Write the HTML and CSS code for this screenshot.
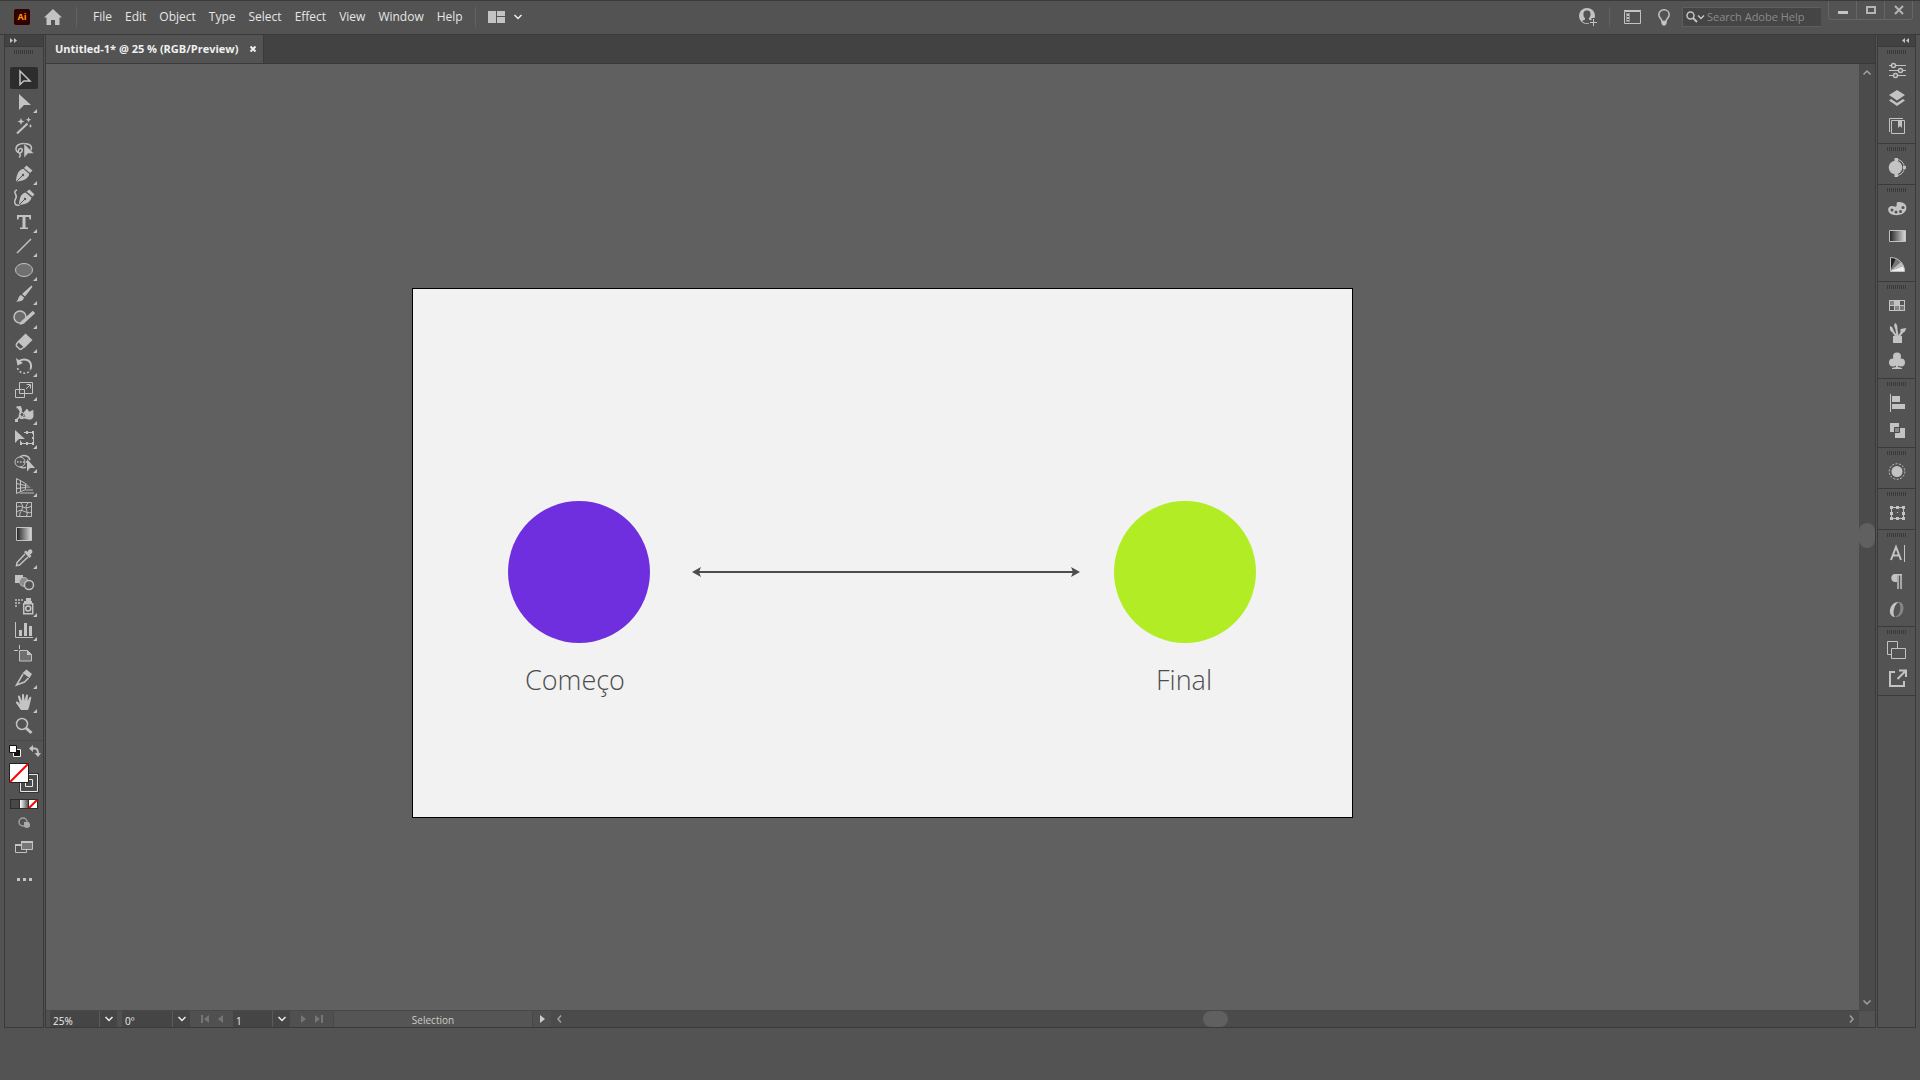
FILE: index.html
```html
<!DOCTYPE html>
<html lang="en">
<head>
<meta charset="utf-8">
<title>Untitled-1* @ 25 % (RGB/Preview)</title>
<link rel="stylesheet" href="styles.css">
</head>
<body>
<header class="topbar">
  <span class="logo">Ai</span>
  <button class="home" aria-label="Home"><svg width="18" height="16" viewBox="0 0 18 16"><path class="f" d="M9 0l9 8.500h-2.500V16H11v-5H7v5H2.500V8.500H0z"/></svg></button>
  <span class="divider"></span>
  <nav class="menu">
    <button>File</button><button>Edit</button><button>Object</button><button>Type</button><button>Select</button><button>Effect</button><button>View</button><button>Window</button><button>Help</button>
  </nav>
  <span class="divider"></span>
  <button class="arrange" aria-label="Arrange documents"><svg width="33" height="12" viewBox="0 0 33 12"><path class="f" d="M0 0h8v12H0zM9 0h8v5H9zM9 6h8v6H9z"/><path class="w15" d="M26.500 4L30 7.500 33.500 4"/></svg></button>
  <div class="topbar-right">
    <button class="account" aria-label="Account"><svg width="20" height="18" viewBox="0 0 20 18"><circle class="f" cx="8" cy="8" r="8"/><path fill="#535353" d="M8 2.500c3 0 3.800 2 3.500 4.500-.2 1.500-.8 2.500-1.500 3v1.500l3 1.500c-3 3-7 3-10 0l3-1.500V10C5 9.500 4.600 8.500 4.500 7 4.200 4.500 5 2.500 8 2.500z"/><path stroke="#535353" stroke-width="4" d="M14.500 10v8M10 14.500h8"/><path class="s" d="M14.500 11v7M11 14.500h7"/></svg></button>
    <span class="divider"></span>
    <button class="workspace-btn" aria-label="Workspace"><svg width="17" height="14" viewBox="0 0 17 14"><path class="s" d="M.5 1.500h16v12H.5z"/><path class="s" d="M0 .5h17"/><path class="s" d="M2.500 3.500h3v8h-3z" opacity=".5"/><path class="f" d="M3 4h2v2H3zM3 7h2v2H3zM3 10h2v1H3z"/></svg></button>
    <button class="tips" aria-label="Learn"><svg width="12" height="17" viewBox="0 0 12 17"><path class="s15" d="M4 12.500C4 10 .8 9 .8 5.700.8 3 3 .8 6 .8S11.200 3 11.200 5.700C11.200 9 8 10 8 12.500z"/><path class="f" d="M3.500 12h5v3L7 16.500H5L3.500 15z"/></svg></button>
    <label class="search"><svg width="19" height="12" viewBox="0 0 19 12"><circle class="s15" cx="4.500" cy="4.500" r="3.500"/><path class="s2" d="M7 7l4 4"/><path class="s15" d="M12 4.500l3 3 3-3"/></svg><input type="text" placeholder="Search Adobe Help" aria-label="Search Adobe Help"></label>
    <div class="window-controls">
      <button aria-label="Minimize"><svg width="12" height="10" viewBox="0 0 12 10"><path class="f" d="M1 6h10v3H1z"/></svg></button>
      <button aria-label="Maximize"><svg width="12" height="10" viewBox="0 0 12 10"><path fill="none" stroke="#b4b4b4" stroke-width="2" d="M2 2h8v6H2z"/></svg></button>
      <button aria-label="Close"><svg width="12" height="10" viewBox="0 0 12 10"><path fill="none" stroke="#b4b4b4" stroke-width="2" d="M2 1l8 8M10 1L2 9"/></svg></button>
    </div>
  </div>
</header>

<main class="main">
  <aside class="panel tools">
    <button class="collapse" aria-label="Expand tools"><svg width="7" height="5" viewBox="0 0 7 5"><path class="f" d="M0 0l3 2.500L0 5zM4 0l3 2.500L4 5z"/></svg></button>
    <span class="grip"></span>
    <div class="tool-list">
      <button class="tool selected" aria-label="Selection"><svg viewBox="0 0 24 24"><path class="s15" d="M8 5v13.500l3.800-3.500H18z"/></svg></button>
      <button class="tool more" aria-label="Direct selection"><svg viewBox="0 0 24 24"><path class="f" d="M7 4v16l5-5h7z"/></svg></button>
      <button class="tool" aria-label="Magic wand"><svg viewBox="0 0 24 24"><path class="s2" d="M5 19.500L15.500 9.500"/><path class="f" d="M9 4l1 2.500 2.500 1-2.500 1-1 2.500-1-2.500-2.500-1 2.500-1zM16.500 3l.8 2 2 .8-2 .8-.8 2-.8-2-2-.8 2-.8zM18.500 10l.6 1.400 1.400.6-1.400.6-.6 1.400-.6-1.400-1.400-.6 1.400-.6z"/></svg></button>
      <button class="tool" aria-label="Lasso"><svg viewBox="0 0 24 24"><path class="s15" d="M6 14.500C3 13 3.500 8.500 6 7c4-2.500 13-1.500 13.500 2.500.1 1.500-.5 2.500-1.500 3.500M7 15c3 .5 4.500-4 2-4.500-2.500-.2-3.500 3-2 4.500 1.500 1.200 2 3 0 4.500"/><path class="f" stroke="#535353" stroke-width=".5" d="M12 5.500v14.500l4-4.500h6z"/></svg></button>
      <button class="tool more" aria-label="Pen"><svg viewBox="0 0 24 24"><path class="f" d="M14.500 3.500l6 5-2.500 2.500-6-5zM11.300 6.700l6 5.300c-1 4-4 6.500-12 7.500L4 19c.6-8 3.300-11.200 7.300-12.300z"/><path stroke="#535353" d="M4.500 19.500l6-6"/><circle cx="11" cy="13" r="1.200" fill="#535353"/></svg></button>
      <button class="tool" aria-label="Curvature"><svg viewBox="0 0 24 24"><path class="f" d="M17.500 3.500l5 5-2 2-6-5zM13.500 6.500l6 5c-1 4-4 6.500-12 7.500L7 18c.6-7 2.500-10.500 6.500-11.500z"/><path stroke="#535353" d="M7 19l6-6"/><circle cx="13" cy="13" r="1.200" fill="#535353"/><path class="s15" d="M5 4c-2 .5-3 2-1.500 4 1.500 2.500 1 4-.5 6-1 3 0 6 4.500 5"/></svg></button>
      <button class="tool more" aria-label="Type"><svg viewBox="0 0 24 24"><path class="f" d="M5 5h14v4.500h-1.500L17 7h-3.500v10.500H16V19H8v-1.500h2.500V7H7l-.5 2.500H5z"/></svg></button>
      <button class="tool more" aria-label="Line segment"><svg viewBox="0 0 24 24"><path class="s15" d="M5 19L19 5"/></svg></button>
      <button class="tool more" aria-label="Ellipse"><svg viewBox="0 0 24 24"><ellipse cx="12" cy="12" rx="8.500" ry="6.500" fill="#707070" stroke="#c3c3c3"/></svg></button>
      <button class="tool more" aria-label="Paintbrush"><svg viewBox="0 0 24 24"><path class="f" d="M19.500 3.500c1 .8 1 1.500.5 2L13 14.500l-3-2.500zM9 13l3 2.500c-.5 3-3 4.500-8 4 3-1.500 2-5.500 5-6.500z"/></svg></button>
      <button class="tool more" aria-label="Shaper"><svg viewBox="0 0 24 24"><circle cx="8" cy="11" r="6" fill="#6b6b6b" stroke="#c3c3c3" stroke-width="1.500"/><path stroke="#c3c3c3" stroke-width="3.500" d="M11 16l11-10"/><path class="f" d="M9.500 14.500l3 3L7.500 19z"/></svg></button>
      <button class="tool more" aria-label="Eraser"><svg viewBox="0 0 24 24"><path class="f" d="M13.500 3.500l7 6.500-8 8-7-6.500z"/><path class="s15" d="M7 11l-2.500 3c-.5 1-.3 1.500 0 2l3 3c1 .5 1.500.5 2 0l2.500-2"/></svg></button>
      <button class="tool more" aria-label="Rotate"><svg viewBox="0 0 24 24"><path class="s2" d="M6 8c5-4.500 12-2.500 13 3 .3 2 0 3-.5 4"/><path class="f" d="M4 4l1.500 7.500L11 9z"/><path class="s15" stroke-dasharray="2 2" d="M5.500 14c2 6 10 7.500 13 1.500"/></svg></button>
      <button class="tool more" aria-label="Scale"><svg viewBox="0 0 24 24"><path class="s" d="M7.500 4.500h13v11h-13zM3.500 11.500h9v8h-9zM14 11l4-4M14.500 6.500h4v4"/></svg></button>
      <button class="tool more" aria-label="Width"><svg viewBox="0 0 24 24"><path class="s2" d="M4.500 5.500c3-.8 4.500 0 4.500 3 0 2.500-2.500 5-1 7s3.500-.5 5.500 0 5 2.500 6.500 0-.5-5 .5-6.500"/><path class="s15" d="M3.500 18.500L14.500 9"/><path class="f" d="M12 10c2-1 1.500-3 3-3s1 3 3 2.500 2-1.500 3.500-1.500L20 16c-3 1-4-1-7-1.500zM3 17h3v3H3zM5 5l4-1 1 5-2 1z"/><circle cx="10" cy="12.500" r="2" class="s solid"/></svg></button>
      <button class="tool more" aria-label="Free transform"><svg viewBox="0 0 24 24"><path class="f" d="M3 4v13l4-4h6z"/><path class="s" d="M12 6.500h9.500v11h-13v-3"/><path class="f" d="M14 5h2v3h-2zM20 5h2v3h-2zM20 11h2v2h-2zM20 16h2v3h-2zM14 16h2v3h-2zM8 16h2v3H8z"/></svg></button>
      <button class="tool more" aria-label="Shape builder"><svg viewBox="0 0 24 24"><circle class="s" cx="8" cy="12" r="5"/><path class="s15" d="M8 7c3-3 9-1.500 10 3M8 17c2 1 5 1 6 0"/><path class="s15" stroke-dasharray="1.500 1.500" d="M5 12h10"/><path class="f" d="M15 9v12.500l3-3.500h5z"/></svg></button>
      <button class="tool more" aria-label="Perspective grid"><svg viewBox="0 0 24 24"><path class="s" d="M4.500 4.500v15l9-4v-6zM4.500 9.500l9 2M4.500 14.500l9-1M8.500 6.500v11"/><path fill="#858585" d="M14 9l5 5h-5zM13 15h8v2h-8zM9 18h13v2H7z"/></svg></button>
      <button class="tool" aria-label="Mesh"><svg viewBox="0 0 24 24"><path class="s" d="M4.500 4.500h15v14h-15zM5 9c5-3 7 4 14.500-1M5 14c5-5 9 3 14.500 0M9 5c5 5-3 9-1 13.500M16 5c-5 5 2 9-2 13.500"/></svg></button>
      <button class="tool" aria-label="Gradient"><svg viewBox="0 0 24 24"><defs><linearGradient id="ramp"><stop offset="0" stop-color="#222"/><stop offset="1" stop-color="#ddd"/></linearGradient></defs><path class="s ramp" d="M4.500 5.500h15v13h-15z"/></svg></button>
      <button class="tool more" aria-label="Eyedropper"><svg viewBox="0 0 24 24"><path class="s15" d="M13 8l-8 8.500-.5 3 3-.5L16 11"/><path class="f" d="M12 6l2-1.500L15.500 6c1-3 3-3.500 4.300-2 1.200 1.500.7 3.500-1.800 4.500l1.500 1.500-2 2z"/></svg></button>
      <button class="tool" aria-label="Blend"><svg viewBox="0 0 24 24"><path class="f" d="M3 5h8v8H3z"/><circle cx="12" cy="12" r="4.500" fill="#8c8c8c" stroke="#b4b4b4"/><circle cx="17" cy="15" r="4.500" class="s15 solid"/></svg></button>
      <button class="tool more" aria-label="Symbol sprayer"><svg viewBox="0 0 24 24"><path class="s15" d="M11.700 9.700h9v10h-9z"/><path class="f" d="M14 4h5v3h-5zM12 7h8v2h-8z"/><circle class="s15" cx="16.200" cy="14.500" r="2.500"/><path fill="#a5a5a5" d="M3 5h2v2H3zM6 5h2v2H6zM9 5h2v2H9zM3 8h2v2H3zM6 8h2v2H6zM3 11h2v2H3z"/></svg></button>
      <button class="tool more" aria-label="Column graph"><svg viewBox="0 0 24 24"><path class="s" d="M3.500 4v15.500H21"/><path class="f" d="M7 12h3v6H7zM12 5h3v13h-3zM17 8h3v10h-3z"/></svg></button>
      <button class="tool" aria-label="Artboard"><svg viewBox="0 0 24 24"><path class="s solid-mid" d="M7.500 8.500h8l4 4v6.500h-12z"/><path class="f" d="M15 8l5 5h-5z"/><path class="s" d="M2 8.500h4M7.500 3v4"/></svg></button>
      <button class="tool more" aria-label="Slice"><svg viewBox="0 0 24 24"><path class="f" d="M14.500 3.500l5.500 4.500-2.500 4-7-5z"/><path class="s15" d="M11 8L4.500 19l8-3 4-4"/></svg></button>
      <button class="tool more" aria-label="Hand"><svg viewBox="0 0 24 24"><path class="f" d="M9 20c-2-2-3-5-5-7-.5-1.500 1-2 2-1l2 2L6 7c-.3-1.500 1.500-2 2-.5L10 11V5c0-1.500 2-1.500 2 0l.5 5.500 1.500-5c.5-1.500 2-1 2 .3L15.500 11l2-3.500c.8-1.300 2.200-.5 1.700.8-1 3-1.200 7.200-3.200 11.700z"/></svg></button>
      <button class="tool" aria-label="Zoom"><svg viewBox="0 0 24 24"><circle class="s15" cx="10" cy="10" r="5.500"/><path stroke="#c3c3c3" stroke-width="3" d="M14 14l5.500 5"/></svg></button>
    </div>
    <div class="paint">
      <div class="paint-top">
        <button aria-label="Default fill and stroke"><svg width="12" height="12" viewBox="0 0 12 12"><path fill="#111" stroke="#eee" d="M4.500 4.500h7v7h-7z"/><path fill="#fff" stroke="#111" d="M.5.500h7v7h-7z"/></svg></button>
        <button aria-label="Swap fill and stroke"><svg width="12" height="12" viewBox="0 0 12 12"><path class="s2" d="M3 3.500h3c2 0 3 1 3 5"/><path class="f" d="M0 3.500L4 0v7zM5.500 8H12l-3 4z"/></svg></button>
      </div>
      <svg class="fill-stroke" width="30" height="30" viewBox="0 0 30 30" role="img" aria-label="Fill none, stroke"><path fill="#333" d="M10 10h20v20H10z"/><path fill="#4b4b4b" stroke="#e8e8e8" d="M11.500 11.500h17v17h-17zM16.500 16.500h7v7h-7z"/><path fill="#fff" stroke="#222" d="M.5.500h19v19H.5z"/><path stroke="#f00" stroke-width="2" d="M1 19L19 1"/></svg>
      <svg class="paint-modes" width="28" height="10" viewBox="0 0 28 10" role="img" aria-label="Color, gradient, none"><path fill="#2d2d2d" d="M0 0h28v10H0z"/><path fill="#484848" d="M1 1h8v8H1z"/><path fill="url(#fade)" d="M10 1h8v8h-8z"/><path fill="#fff" d="M19 1h8v8h-8z"/><path stroke="#f00" stroke-width="2" d="M19 9l8-8"/><defs><linearGradient id="fade"><stop offset="0" stop-color="#fff"/><stop offset="1" stop-color="#555"/></linearGradient></defs></svg>
      <button class="tool" aria-label="Drawing mode"><svg viewBox="0 0 24 24"><circle cx="11" cy="11" r="4" class="dim"/><path fill="#aaa" d="M12 11h5v5h-5z"/><circle cx="15" cy="14" r="3" fill="#aaa"/></svg></button>
      <button class="tool" aria-label="Screen mode"><svg viewBox="0 0 24 24"><path class="s" d="M3.500 9.500h11v8h-11z"/><path fill="#777" stroke="#c3c3c3" d="M9.500 6.500h11v8h-11z"/><path class="f" d="M3 9h6v2H3zM9 6h12v2H9z"/></svg></button>
      <button class="tool dots" aria-label="Edit toolbar"><svg viewBox="0 0 24 24"><path class="f" d="M5 11h3v3H5zM11 11h3v3h-3zM17 11h3v3h-3z"/></svg></button>
    </div>
  </aside>

  <section class="workspace">
    <div class="tabs">
      <div class="tab"><span>Untitled-1* @ 25 % (RGB/Preview)</span><button aria-label="Close document"><svg width="6" height="6" viewBox="0 0 6 6"><path stroke="#eee" stroke-width="2" d="M.5.500l5 5M5.500.500l-5 5"/></svg></button></div>
    </div>
    <div class="view">
      <div class="canvas">
        <div class="artboard">
          <span class="dot start"></span>
          <svg class="arrow" width="388" height="18" viewBox="0 0 388 18"><path stroke="#4d4d4d" stroke-width="2" d="M5 9h378"/><path fill="#4d4d4d" d="M0 9l9-5-2 5 2 5zM388 9l-9-5 2 5-2 5z"/></svg>
          <span class="dot end"></span>
          <span class="caption start-caption">Começo</span>
          <span class="caption end-caption">Final</span>
        </div>
      </div>
      <div class="scroll-y">
        <button aria-label="Scroll up"><svg width="8" height="5" viewBox="0 0 8 5"><path class="dim" d="M.5 4.500L4 1l3.500 3.500"/></svg></button>
        <span class="track-y"><span class="thumb-y"></span></span>
        <button aria-label="Scroll down"><svg width="8" height="5" viewBox="0 0 8 5"><path class="dim" d="M.5.500L4 4 7.500.500"/></svg></button>
      </div>
    </div>
    <div class="status">
      <div class="combo zoom"><input type="text" value="25%" aria-label="Zoom level"><button aria-label="Zoom presets"><svg width="8" height="6" viewBox="0 0 8 6"><path class="w15" d="M.5 1L4 4.500 7.500 1"/></svg></button></div>
      <div class="combo rotate"><input type="text" value="0º" aria-label="Rotation"><button aria-label="Rotation presets"><svg width="8" height="6" viewBox="0 0 8 6"><path class="w15" d="M.5 1L4 4.500 7.500 1"/></svg></button></div>
      <div class="pager"><button aria-label="First artboard"><svg width="8" height="8" viewBox="0 0 8 8"><path fill="#757575" d="M0 0h2v8H0zM8 0v8L3 4z"/></svg></button><button aria-label="Previous artboard"><svg width="5" height="8" viewBox="0 0 5 8"><path fill="#757575" d="M5 0v8L0 4z"/></svg></button></div>
      <div class="combo board"><input type="text" value="1" aria-label="Artboard"><button aria-label="Artboard list"><svg width="8" height="6" viewBox="0 0 8 6"><path class="w15" d="M.5 1L4 4.500 7.500 1"/></svg></button></div>
      <div class="pager"><button aria-label="Next artboard"><svg width="5" height="8" viewBox="0 0 5 8"><path fill="#757575" d="M0 0v8l5-4z"/></svg></button><button aria-label="Last artboard"><svg width="8" height="8" viewBox="0 0 8 8"><path fill="#757575" d="M6 0h2v8H6zM0 0v8l5-4z"/></svg></button></div>
      <span class="mode">Selection</span>
      <button class="mode-menu" aria-label="Status menu"><svg width="5" height="8" viewBox="0 0 5 8"><path fill="#ccc" d="M0 0v8l5-4z"/></svg></button>
      <div class="scroll-x">
        <button aria-label="Scroll left"><svg width="5" height="8" viewBox="0 0 5 8"><path class="dim" d="M4 .500L1 4l3 3.500"/></svg></button>
        <span class="track-x"><span class="thumb-x"></span></span>
        <button aria-label="Scroll right"><svg width="5" height="8" viewBox="0 0 5 8"><path class="dim" d="M1 .500L4 4 1 7.500"/></svg></button>
      </div>
      <span class="corner"></span>
    </div>
  </section>

  <aside class="panel dock">
    <button class="collapse right" aria-label="Expand panels"><svg width="7" height="5" viewBox="0 0 7 5"><path class="f" d="M3 0L0 2.500 3 5zM7 0L4 2.500 7 5z"/></svg></button>
    <div class="group"><span class="grip"></span>
      <button aria-label="Properties"><svg viewBox="0 0 24 24"><path class="s" d="M4 7.500h17M4 12.500h17M4 17.500h17"/><g class="s15 solid"><circle cx="8.500" cy="7.500" r="2"/><circle cx="15.500" cy="12.500" r="2"/><circle cx="10.500" cy="17.500" r="2"/></g></svg></button>
      <button aria-label="Layers"><svg viewBox="0 0 24 24"><path class="f" d="M12 4l8 5-8 5.500L4 9zM6 13l-2 1.500L12 20l8-5.500-2-1.500-6 4z"/></svg></button>
      <button aria-label="Libraries"><svg viewBox="0 0 24 24"><path class="s" d="M6.500 6.500h13v13h-13zM4.500 18V4.500H18"/><path class="f" d="M13 6h4v8l-2-2-2 2z"/></svg></button>
    </div>
    <div class="group"><span class="grip"></span>
      <button aria-label="Color guide"><svg viewBox="0 0 24 24"><path class="s" d="M11 4.500c11 0 11 16 0 16"/><circle class="f" cx="10.500" cy="12.500" r="6.800"/><path class="f" d="M9.500 3h3.500v3H9.500zM18 11h3v3h-3zM9.500 19h3.500v3H9.500z"/></svg></button>
    </div>
    <div class="group"><span class="grip"></span>
      <button aria-label="Color"><svg viewBox="0 0 24 24"><path class="f" d="M14 6c6 0 8.500 4 7 8-2 5-9 6-14 4.500-5-2-5-8-.5-8.500 2 0 4 1.500 5 0S10 6 14 6z"/><g fill="#535353"><circle cx="7" cy="14" r="1.500"/><circle cx="11" cy="16" r="1.500"/><circle cx="15.500" cy="15.500" r="1.500"/><circle cx="18" cy="11.500" r="1.500"/></g></svg></button>
      <button aria-label="Gradient"><svg viewBox="0 0 24 24"><path class="s ramp" d="M4.500 6.500h16v11h-16z"/></svg></button>
      <button aria-label="Gradient mesh"><svg viewBox="0 0 24 24"><path fill="#222" d="M5 5c2 0 4 .5 6 1.500L5 19z"/><path fill="#777" d="M11 6.500L16 10 5 19z"/><path fill="#bbb" d="M16 10l2.500 4L5 19z"/><path fill="#eee" d="M18.500 14l1.500 5H5z"/><path class="s" d="M5.500 5.500c8 0 14 6 14 14h-14z"/></svg></button>
    </div>
    <div class="group"><span class="grip"></span>
      <button aria-label="Swatches"><svg viewBox="0 0 24 24"><path class="f" d="M4 7h16v11H4z"/><path fill="#858585" d="M5 8h4v4H5zM10 13h4v4h-4z"/><path fill="#555" d="M15 8h4v4h-4zM5 13h4v4H5z"/><path fill="#777" d="M15 13h4v4h-4z"/></svg></button>
      <button aria-label="Brushes"><svg viewBox="0 0 24 24"><path class="f" d="M8 15h9v7H8z"/><path class="s2" d="M11 15L7 9M12.500 15L11 6M14 15l5-6"/><path class="f" d="M5 5c3 1 4 4 3.500 6.500C5.500 11 4.500 9 5 5zM10 2c2.500 1 3 5 1.500 7-2.500-2-3-5-1.500-7zM15.500 8l6-1-2 4-4 1z"/></svg></button>
      <button aria-label="Symbols"><svg viewBox="0 0 24 24"><g class="f"><circle cx="12" cy="7.500" r="4"/><circle cx="8" cy="13.500" r="4"/><circle cx="16" cy="13.500" r="4"/><path d="M11 11h2v7l4 1v1H7v-1l4-1z"/></g></svg></button>
    </div>
    <div class="group"><span class="grip"></span>
      <button aria-label="Align"><svg viewBox="0 0 24 24"><path class="s" d="M5.500 4v18"/><path class="f" d="M7 6h8v6H7zM7 14h13v5H7z"/></svg></button>
      <button aria-label="Pathfinder"><svg viewBox="0 0 24 24"><path class="f" d="M5 5h9v9H5zM10 10h10v10H10z"/><path stroke="#4a4a4a" fill="#888" d="M9.500 9.500h5v5h-5z"/></svg></button>
    </div>
    <div class="group"><span class="grip"></span>
      <button aria-label="Appearance"><svg viewBox="0 0 24 24"><circle class="f" cx="12" cy="12.500" r="5.500"/><circle class="s" cx="12" cy="12.500" r="7.800" stroke-dasharray="2 1.500"/></svg></button>
    </div>
    <div class="group"><span class="grip"></span>
      <button aria-label="Transform"><svg viewBox="0 0 24 24"><path class="s" d="M6.500 7.500h12v11h-12z"/><path class="f" d="M5 6h3v3H5zM11 6h3v3h-3zM17 6h3v3h-3zM5 12h3v3H5zM17 12h3v3h-3zM5 17h3v3H5zM11 17h3v3h-3zM17 17h3v3h-3zM12 12h1v1h-1z"/></svg></button>
    </div>
    <div class="group"><span class="grip"></span>
      <button aria-label="Character"><svg viewBox="0 0 24 24"><path class="s2" d="M6 19l5-13 5 13M8 14.500h6"/><path class="s" d="M19.500 4v17"/></svg></button>
      <button aria-label="Paragraph"><svg viewBox="0 0 24 24"><path class="f" d="M10 5c-5 0-5 8 0 8h2V5z"/><path class="s15" d="M10 5.700h7M13 5v15M16 5v15"/></svg></button>
      <button aria-label="OpenType"><svg viewBox="0 0 24 24"><path fill="#858585" d="M13 5c8-1 7 14-1 15l-2-.5c6-1 7-12 3-14.500z"/><path class="f" d="M14 5C5 4 1 19 10 20c-3-3-1-13 4-15z"/></svg></button>
    </div>
    <div class="group"><span class="grip"></span>
      <button aria-label="Asset export"><svg viewBox="0 0 24 24"><path class="s" d="M7 16.500H2.500v-13h10v7"/><path class="s" d="M6.500 10.500h14v10h-14z"/></svg></button>
      <button aria-label="Export"><svg viewBox="0 0 24 24"><path class="s2" d="M10 6H5v14h14v-5M12.500 13L20 5.500M14 4.500h7V11"/></svg></button>
    </div>
  </aside>
</main>
<footer class="bottom"></footer>
</body>
</html>
```
FILE: styles.css
```css
* { box-sizing: border-box; }
body {
  margin: 0;
  min-height: 100vh;
  display: flex;
  flex-direction: column;
  background: #535353;
  color: #e6e6e6;
  font-family: "Open Sans", "Noto Sans", sans-serif;
  font-size: 12px;
}
button, input {
  margin: 0;
  padding: 0;
  border: 0;
  background: none;
  color: inherit;
  font: inherit;
}
button { display: flex; align-items: center; justify-content: center; }
svg { display: block; flex: none; overflow: visible; }

/* icon paint */
.f { fill: #c3c3c3; }
.s, .s15, .s2 { fill: none; stroke: #c3c3c3; }
.s15 { stroke-width: 1.5; }
.s2 { stroke-width: 2; }
.solid { fill: #535353; }
.solid-mid { fill: #707070; }
.ramp { fill: url(#ramp); }
.dim { fill: none; stroke: #a0a0a0; stroke-width: 1.5; }
.w15 { fill: none; stroke: #eee; stroke-width: 1.5; }

/* top bar */
.topbar {
  height: 34px;
  display: flex;
  align-items: center;
  padding: 0 0 1px 14px;
  border-top: 1px solid #3a3a3a;
}
.logo {
  width: 16px;
  height: 16px;
  border-radius: 2px;
  background: #330000;
  color: #ff9a00;
  font-size: 9px;
  font-weight: bold;
  line-height: 16px;
  text-align: center;
}
.home { margin: 0 14px; }
.divider { width: 1px; height: 20px; background: #626262; }
.menu { display: flex; gap: 13px; padding: 0 12px 1px 16px; }
.arrange { margin-left: 12px; }
.topbar-right { margin-left: auto; display: flex; align-items: center; align-self: stretch; padding-right: 7px; }
.account { margin-right: 10px; }
.workspace-btn { margin: 0 17px 0 14px; }
.search {
  width: 139px;
  height: 20px;
  margin: 0 7px 0 12px;
  display: flex;
  align-items: center;
  gap: 2px;
  padding-left: 3px;
  background: #454545;
  border: 1px solid #5e5e5e;
  border-right: 0;
}
.search input { flex: 1; min-width: 0; padding-bottom: 1px; font-size: 11px; }
.search input::placeholder { color: #8a8a8a; opacity: 1; }
.window-controls {
  align-self: flex-start;
  display: flex;
  height: 19px;
  border: 1px solid #666;
  border-top: 0;
  border-radius: 0 0 3px 3px;
}
.window-controls button { width: 27px; }
.window-controls button + button { width: 28px; border-left: 1px solid #666; }

/* main frame */
.main {
  flex: 1;
  display: flex;
  gap: 1px;
  padding: 0 4px;
  border-top: 1px solid #3a3a3a;
}
.panel {
  flex: none;
  width: 39px;
  border: 1px solid #3a3a3a;
  border-top: 0;
}
.tools { width: 40px; }
.collapse {
  width: 100%;
  height: 12px;
  justify-content: flex-start;
  padding-left: 5px;
  background: #424242;
  border-bottom: 1px solid #3a3a3a;
}
.collapse.right { justify-content: flex-end; padding: 0 6px; }
.grip {
  display: block;
  width: 19px;
  height: 9px;
  margin: 0 auto;
  background: repeating-linear-gradient(90deg, #3a3a3a 0 1px, transparent 1px 2px) 0 3px / 19px 4px no-repeat;
}

/* tools */
.tools .grip { margin-left: 9px; }
.tool-list { padding: 10px 0 1px 5px; }
.tool {
  position: relative;
  width: 28px;
  height: 22px;
  margin: 1px 0 2px;
  border-radius: 2px;
}
.tool + .tool { margin-top: 2px; }
.tool svg { width: 24px; height: 24px; }
.selected { background: #2d2d2d; }
.more::after {
  content: "";
  position: absolute;
  right: 1px;
  bottom: 0;
  border: 2px solid transparent;
  border-right-color: #c3c3c3;
  border-bottom-color: #c3c3c3;
}
.paint { margin-left: 4px; padding-top: 4px; border-top: 1px solid #484848; }
.paint-top { display: flex; gap: 8px; }
.fill-stroke { margin-top: 6px; }
.paint-modes { margin: 6px 0 3px 1px; }
.paint .tool { margin-left: 1px; }
.paint .dots { margin-top: 10px; }

/* dock */
.group { padding-bottom: 3px; border-bottom: 1px solid #3a3a3a; }
.group button { width: 100%; height: 28px; }
.group svg { width: 24px; height: 24px; }

/* workspace */
.workspace {
  flex: 1;
  min-width: 0;
  display: flex;
  flex-direction: column;
  border: 1px solid #3a3a3a;
  border-top: 0;
}
.tabs { display: flex; height: 29px; background: #424242; border-bottom: 1px solid #3a3a3a; }
.tab {
  width: 218px;
  display: flex;
  align-items: center;
  justify-content: space-between;
  padding: 0 7px 1px 9px;
  background: #535353;
  border-right: 1px solid #3a3a3a;
  font-size: 11px;
  font-weight: bold;
  color: #f0f0f0;
  white-space: nowrap;
}
.view { flex: 1; display: flex; }
.canvas { position: relative; flex: 1; background: #606060; overflow: hidden; }
.artboard {
  position: absolute;
  left: 366px;
  top: 224px;
  width: 941px;
  height: 530px;
  background: #f2f2f2;
  border: 1px solid #000;
}
.dot { position: absolute; top: 212px; width: 142px; height: 142px; border-radius: 50%; }
.start { left: 95px; background: #6f2fde; }
.end { left: 701px; background: #b2ec25; }
.arrow { position: absolute; left: 279px; top: 274px; }
.caption {
  position: absolute;
  top: 371px;
  color: #4d4d4d;
  font-size: 27px;
  font-weight: 300;
  line-height: 40px;
}
.start-caption { left: 112px; }
.end-caption { left: 743px; }

.scroll-y { width: 16px; display: flex; flex-direction: column; background: #4b4b4b; }
.scroll-y button { height: 16px; }
.track-y { flex: 1; display: flex; flex-direction: column; padding-top: 443px; }
.thumb-y { height: 25px; border-radius: 8px; background: #606060; }

/* status bar */
.status { display: flex; height: 17px; padding-left: 4px; background: #505050; border-top: 1px solid #484848; font-size: 10px; }
.combo { display: flex; background: #454545; color: #eee; }
.combo input { flex: 1; min-width: 0; padding: 4px 0 0 3px; }
.combo button { width: 18px; border-left: 1px solid #5a5a5a; }
.zoom { width: 67px; margin-right: 5px; }
.rotate { width: 68px; }
.board { width: 57px; }
.pager { width: 43px; display: flex; align-items: center; justify-content: center; gap: 9px; }
.mode {
  width: 200px;
  background: #555;
  border: solid #484848;
  border-width: 0 1px;
  line-height: 19px;
  text-align: center;
  color: #ccc;
}
.mode-menu { width: 18px; }
.scroll-x { flex: 1; display: flex; background: #4b4b4b; }
.scroll-x button { width: 16px; }
.track-x { flex: 1; display: flex; padding-left: 636px; }
.thumb-x { width: 25px; border-radius: 8px; background: #606060; }
.corner { width: 16px; background: #535353; }
.bottom { height: 52px; }
```
